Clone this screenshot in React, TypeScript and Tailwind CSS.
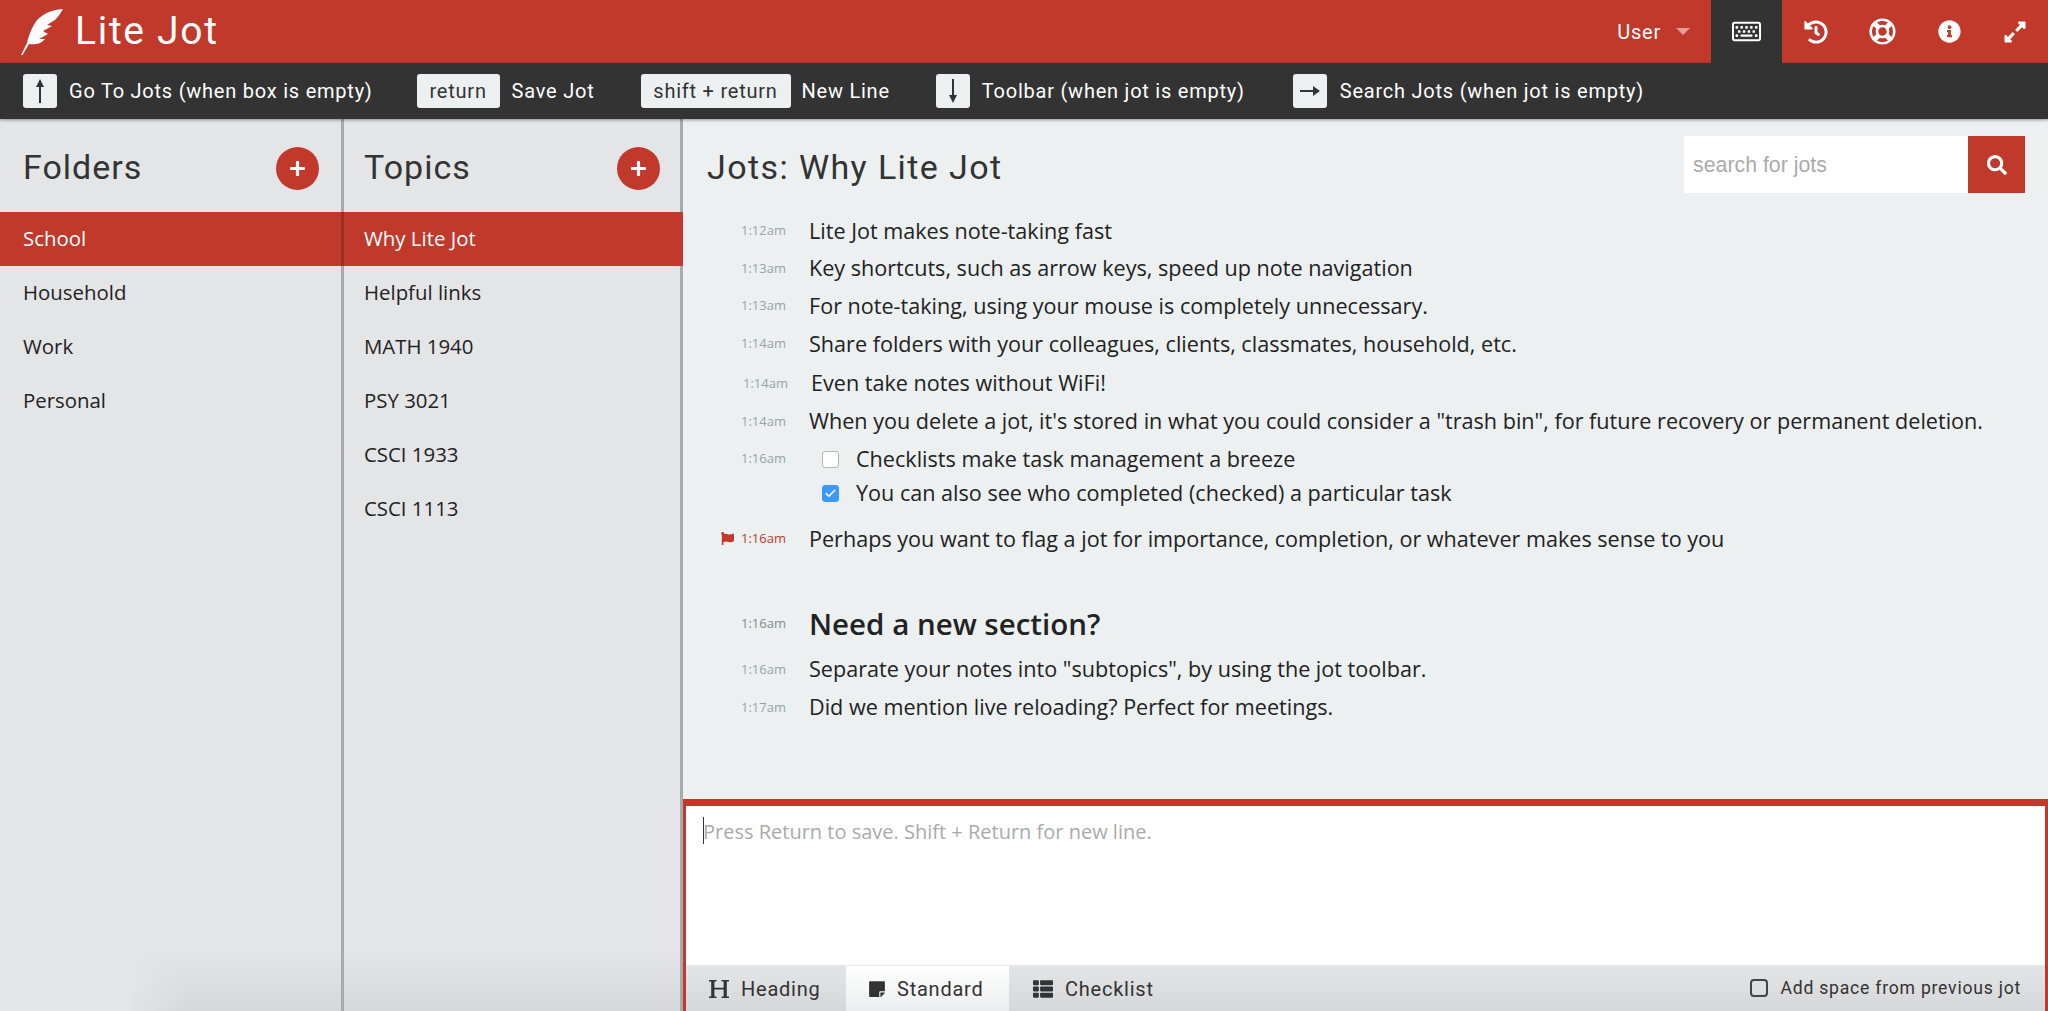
import { Check } from 'lucide-react'
import {
  FaExpandAlt,
  FaFlag,
  FaHistory,
  FaInfoCircle,
  FaPlus,
  FaRegKeyboard,
  FaRegLifeRing,
  FaSearch,
  FaStickyNote,
  FaThList,
} from 'react-icons/fa'

const UI = "font-['Roboto',sans-serif] tracking-[0.77px]"
const BODY = "font-['Open_Sans',sans-serif]"

const folders = ['School', 'Household', 'Work', 'Personal']
const topics = ['Why Lite Jot', 'Helpful links', 'MATH 1940', 'PSY 3021', 'CSCI 1933', 'CSCI 1113']

function Quill() {
  return (
    <svg viewBox="0 0 42 46" className="h-[46px] w-[42px] fill-white">
      <path d="M42 0C30 1 20 5 14 14 9 22 7 30 6 34L0 46 1.5 46 8 35C13 36 20 35 24 30L18 30 27 25 22 22 31 17 26 16 34 11C38 7 40 3 42 0Z" />
    </svg>
  )
}

function SerifH() {
  return (
    <svg viewBox="0 0 20 20" className="h-[20px] w-[20px] fill-[#333]">
      <path d="M0 1h7.5v1.4H5.4v6.4h9.2V2.4h-2.1V1H20v1.4h-2.2v15.2H20V19h-7.5v-1.4h2.1v-7.2H5.4v7.2h2.1V19H0v-1.4h2.2V2.4H0z" />
    </svg>
  )
}

function Arrow({ dir }: { dir: 'up' | 'down' | 'right' }) {
  if (dir === 'right') {
    return (
      <svg viewBox="0 0 20 12" className="h-[12px] w-[20px] fill-[#333]">
        <path d="M0 5h13V1l7 5-7 5V7H0z" />
      </svg>
    )
  }
  return (
    <svg viewBox="0 0 10 24" className={`h-[24px] w-[10px] fill-[#333] ${dir === 'down' ? 'rotate-180' : ''}`}>
      <path d="M5 0l4 8H6v16H4V8H1z" />
    </svg>
  )
}

function Key({ children, className }: { children: React.ReactNode; className: string }) {
  return (
    <div className={`flex h-[34px] items-center justify-center rounded-[3px] bg-[#ecf0f1] text-[#333] ${className}`}>
      {children}
    </div>
  )
}

function Panel({
  title,
  items,
  className,
  headClass,
  activeClass,
  shadeClass,
}: {
  title: string
  items: string[]
  className: string
  headClass: string
  activeClass: string
  shadeClass: string
}) {
  return (
    <div className={`relative flex shrink-0 flex-col border-r-[3px] border-[#a9aaab] bg-[#e4e5e7] ${className}`}>
      <div className={`flex h-[93px] items-center justify-between pt-[6px] ${headClass}`}>
        <h2 className={`${UI} -mt-[2px] text-[34px] font-normal tracking-[1px] text-[#333]`}>{title}</h2>
        <div className="flex h-[43px] w-[43px] items-center justify-center rounded-full bg-[#c0392b] text-[17px] text-white">
          <FaPlus />
        </div>
      </div>
      {items.map((item, i) => (
        <div
          key={item}
          className={`${BODY} flex h-[54px] items-center pb-[2px] text-[20.4px] ${i === 0 ? activeClass : 'text-[#222]'}`}
        >
          {item}
        </div>
      ))}
      <div className={`absolute bottom-0 left-0 right-0 h-[60px] bg-gradient-to-t from-[#d6d7d9] to-transparent ${shadeClass}`} />
    </div>
  )
}

function Time({ children, className = 'text-[#95a5a6]' }: { children: React.ReactNode; className?: string }) {
  return <span className={`${BODY} w-[48px] shrink-0 text-right text-[13px] ${className}`}>{children}</span>
}

function Jot({ time, text, shift }: { time: string; text: string; shift?: boolean }) {
  return (
    <div className={`flex h-[37.7px] items-center ${shift ? 'mt-[2px] pl-[57px]' : 'pl-[55px]'}`}>
      <Time>{time}</Time>
      <p className="ml-[23px] text-[21.6px] text-[#222]">{text}</p>
    </div>
  )
}

function CheckItem({ checked, text }: { checked?: boolean; text: string }) {
  return (
    <div className="flex h-[34px] items-center">
      <div
        className={`flex h-[17px] w-[17px] items-center justify-center rounded-[3px] border ${
          checked ? 'border-[#3b99fc] bg-[#3b99fc]' : 'border-[#b5b5b5] bg-white'
        }`}
      >
        {checked && <Check size={13} strokeWidth={3} className="text-white" />}
      </div>
      <p className="ml-[17px] text-[21.6px] text-[#222]">{text}</p>
    </div>
  )
}

export default function App() {
  return (
    <div className="flex h-[1011px] flex-col overflow-hidden bg-[#ecf0f1]">
      <header className="flex h-[63px] shrink-0 items-center bg-[#c0392b] text-white">
        <div className="ml-[21px]">
          <Quill />
        </div>
        <h1 className={`${UI} ml-[12px] text-[39px] font-normal tracking-[1.7px]`}>Lite Jot</h1>
        <div className={`${UI} ml-auto flex items-center text-[20px]`}>
          User
          <span className="ml-[15px] h-0 w-0 border-x-[7px] border-t-[7px] border-x-transparent border-t-[#e0a098]" />
        </div>
        <div className="ml-[21px] flex h-full w-[71px] items-center justify-center bg-[#333] text-[29px]">
          <FaRegKeyboard />
        </div>
        <div className="ml-[22px] text-[24px]">
          <FaHistory />
        </div>
        <div className="ml-[41px] text-[27px]">
          <FaRegLifeRing />
        </div>
        <div className="ml-[42px] text-[23px]">
          <FaInfoCircle />
        </div>
        <div className="ml-[42px] mr-[21px] text-[24px]">
          <FaExpandAlt />
        </div>
      </header>

      <div className={`${UI} z-10 flex h-[56px] shrink-0 items-center bg-[#333] text-[20px] text-white shadow-[0_1px_3px_rgba(0,0,0,0.4)]`}>
        <Key className="ml-[23px] w-[34px]">
          <Arrow dir="up" />
        </Key>
        <span className="ml-[12px]">Go To Jots (when box is empty)</span>
        <Key className="ml-[44px] w-[83px]">return</Key>
        <span className="ml-[12px]">Save Jot</span>
        <Key className="ml-[46px] w-[150px]">shift + return</Key>
        <span className="ml-[11px]">New Line</span>
        <Key className="ml-[46px] w-[34px]">
          <Arrow dir="down" />
        </Key>
        <span className="ml-[12px]">Toolbar (when jot is empty)</span>
        <Key className="ml-[48px] w-[34px]">
          <Arrow dir="right" />
        </Key>
        <span className="ml-[13px]">Search Jots (when jot is empty)</span>
      </div>

      <div className="flex min-h-0 flex-1">
        <Panel
          title="Folders"
          items={folders}
          className="w-[344px] pl-[23px]"
          headClass="pr-[22px]"
          activeClass="-ml-[23px] -mr-[3px] border-r-[3px] border-[#9c2f23] bg-[#c0392b] pl-[23px] text-white"
          shadeClass="[mask-image:linear-gradient(to_right,transparent_130px,black_190px)]"
        />
        <Panel
          title="Topics"
          items={topics}
          className="w-[339px] pl-[20px]"
          headClass="pr-[20px]"
          activeClass="-ml-[20px] -mr-[3px] bg-[#c0392b] pl-[20px] text-white"
          shadeClass=""
        />

        <main className="flex min-w-0 flex-1 flex-col">
          <div className="flex h-[93px] shrink-0 items-center justify-between pl-[24px] pr-[23px] pt-[6px]">
            <h2 className={`${UI} -mt-[2px] text-[34px] font-normal tracking-[1.4px] text-[#333]`}>Jots: Why Lite Jot</h2>
            <div className="-mt-[8px] flex h-[57px]">
              <div className="flex w-[284px] items-center bg-white pl-[9px] pt-[3px] font-['Liberation_Sans',sans-serif] text-[21.33px] text-[#aaa]">
                search for jots
              </div>
              <div className="flex w-[57px] items-center justify-center bg-[#c0392b] text-[20px] text-white">
                <FaSearch />
              </div>
            </div>
          </div>

          <div className={`${BODY} flex-1`}>
            <Jot time="1:12am" text="Lite Jot makes note-taking fast" />
            <Jot time="1:13am" text="Key shortcuts, such as arrow keys, speed up note navigation" />
            <Jot time="1:13am" text="For note-taking, using your mouse is completely unnecessary." />
            <Jot time="1:14am" text="Share folders with your colleagues, clients, classmates, household, etc." />
            <Jot time="1:14am" text="Even take notes without WiFi!" shift />
            <Jot
              time="1:14am"
              text={'When you delete a jot, it\'s stored in what you could consider a "trash bin", for future recovery or permanent deletion.'}
            />
            <div className="mt-[2px] flex pl-[55px]">
              <div className="flex h-[34px] items-center">
                <Time>1:16am</Time>
              </div>
              <div className="ml-[36px]">
                <CheckItem text="Checklists make task management a breeze" />
                <CheckItem checked text="You can also see who completed (checked) a particular task" />
              </div>
            </div>
            <div className="relative mt-[10px] flex h-[37.7px] items-center pl-[55px]">
              <FaFlag className="absolute left-[38px] text-[13px] text-[#c0392b]" />
              <Time className="text-[#c0392b]">1:16am</Time>
              <p className="ml-[23px] text-[21.6px] text-[#222]">
                Perhaps you want to flag a jot for importance, completion, or whatever makes sense to you
              </p>
            </div>
            <div className="mt-[46px] flex h-[40px] items-center pl-[55px]">
              <Time className="font-medium text-[#7f8c8d]">1:16am</Time>
              <p className="ml-[23px] text-[29.5px] font-semibold text-[#222]">Need a new section?</p>
            </div>
            <div className="mt-[7px]">
              <Jot time="1:16am" text={'Separate your notes into "subtopics", by using the jot toolbar.'} />
              <Jot time="1:17am" text="Did we mention live reloading? Perfect for meetings." />
            </div>
          </div>

          <div className="flex h-[212px] shrink-0 flex-col border-x-[3px] border-t-[7px] border-[#c0392b] bg-white">
            <div className={`${BODY} relative flex-1 pl-[17px] pt-[11px] text-[20px] text-[#aaa]`}>
              <span className="absolute left-[17px] top-[11px] h-[27px] w-px bg-[#333]" />
              Press Return to save. Shift + Return for new line.
            </div>
            <div className={`${UI} flex h-[46px] shrink-0 items-center bg-gradient-to-t from-[#d6d7d9] to-[#e4e5e7] pt-px text-[20px] text-[#333]`}>
              <div className="flex h-full w-[160px] items-center pl-[23px]">
                <SerifH />
                <span className="ml-[12px]">Heading</span>
              </div>
              <div className="flex h-full w-[163px] items-center bg-gradient-to-t from-[#ecedee] to-white pl-[22px]">
                <FaStickyNote className="text-[18px]" />
                <span className="ml-[11px]">Standard</span>
              </div>
              <div className="flex h-full items-center pl-[24px]">
                <FaThList className="text-[20px]" />
                <span className="ml-[12px]">Checklist</span>
              </div>
              <div className="ml-auto flex items-center pr-[24px] text-[17.6px]">
                <div className="h-[18px] w-[18px] rounded-[4px] border-2 border-[#444]" />
                <span className="ml-[12px]">Add space from previous jot</span>
              </div>
            </div>
          </div>
        </main>
      </div>
    </div>
  )
}
